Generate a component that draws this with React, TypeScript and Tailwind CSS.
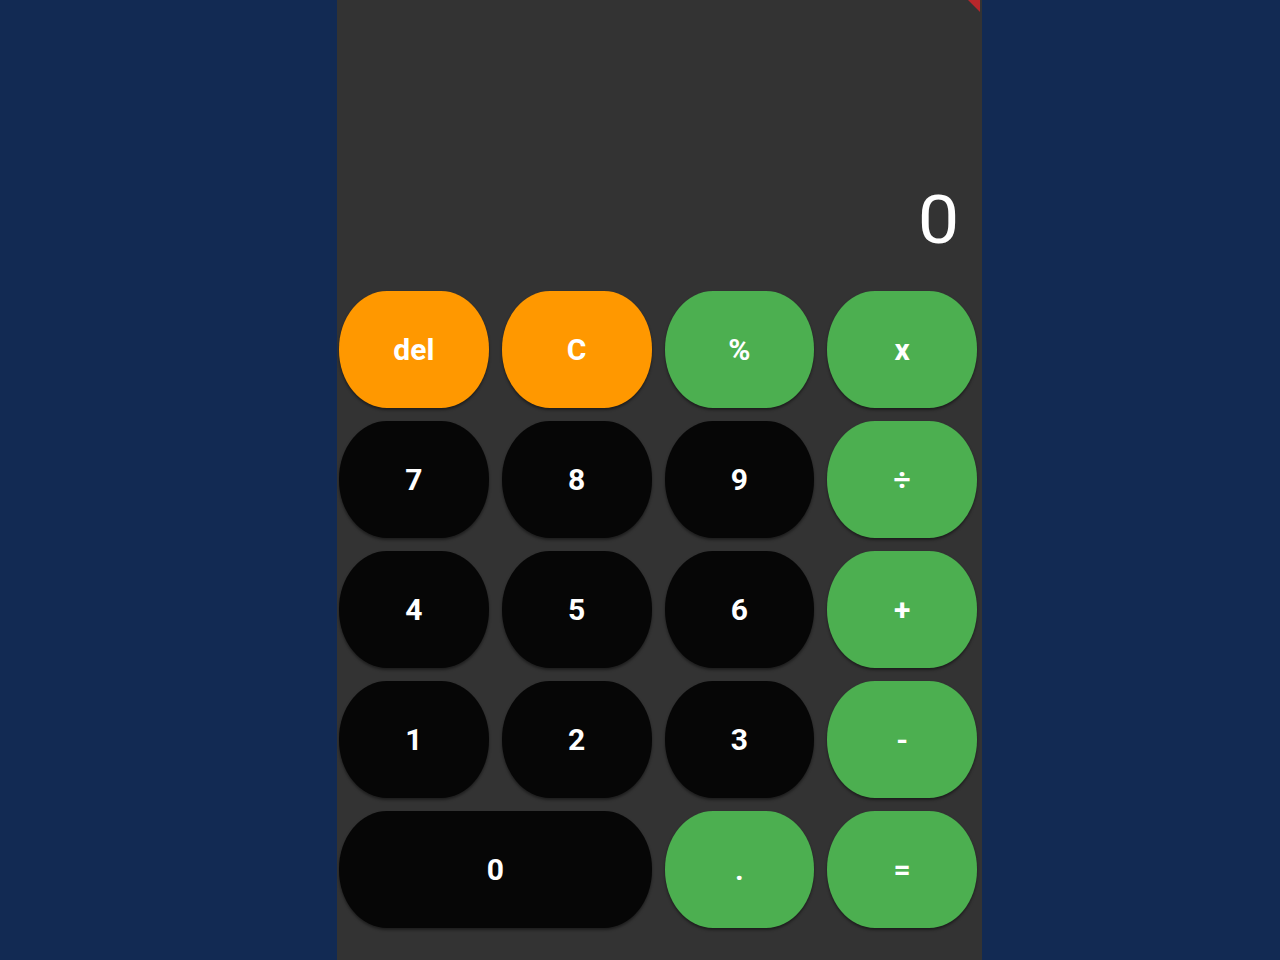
import React from "react"

type Kind = "orange" | "green" | "black"

const keys: { label: string; kind: Kind; wide?: boolean }[] = [
    { label: "del", kind: "orange" },
    { label: "C", kind: "orange" },
    { label: "%", kind: "green" },
    { label: "x", kind: "green" },
    { label: "7", kind: "black" },
    { label: "8", kind: "black" },
    { label: "9", kind: "black" },
    { label: "÷", kind: "green" },
    { label: "4", kind: "black" },
    { label: "5", kind: "black" },
    { label: "6", kind: "black" },
    { label: "+", kind: "green" },
    { label: "1", kind: "black" },
    { label: "2", kind: "black" },
    { label: "3", kind: "black" },
    { label: "-", kind: "green" },
    { label: "0", kind: "black", wide: true },
    { label: ".", kind: "green" },
    { label: "=", kind: "green" },
]

const kindClass: Record<Kind, string> = {
    orange: "bg-[#ff9800]",
    green: "bg-[#4caf50]",
    black: "bg-[#060606]",
}

export default function App() {
    return (
        <div className="min-h-[960px] w-full bg-[#122a53] font-['Roboto',sans-serif]">
            <div className="relative ml-[337px] flex h-[960px] w-[645px] flex-col overflow-hidden bg-[#333333]">
                {/* debug banner corner */}
                <svg className="absolute right-0 top-0" width="16" height="14" viewBox="0 0 16 14">
                    <polygon points="2,0 14,0 14,12" fill="#b8272b" />
                </svg>

                <div className="flex h-[291px] items-end justify-end pb-[37px] pr-[25px]">
                    <span className="inline-block scale-x-[1.12] text-[66px] font-normal leading-none text-white">0</span>
                </div>

                <div className="grid grid-cols-4 gap-[13px] pl-[2px] pr-[5px]">
                    {keys.map((k) => (
                        <button
                            key={k.label}
                            className={`flex h-[117px] items-center justify-center rounded-[48px/58px] text-[30px] font-bold text-white shadow-[0_2px_3px_rgba(0,0,0,0.45)] ${kindClass[k.kind]} ${k.wide ? "col-span-2" : ""}`}
                        >
                            {k.label}
                        </button>
                    ))}
                </div>
            </div>
        </div>
    )
}
